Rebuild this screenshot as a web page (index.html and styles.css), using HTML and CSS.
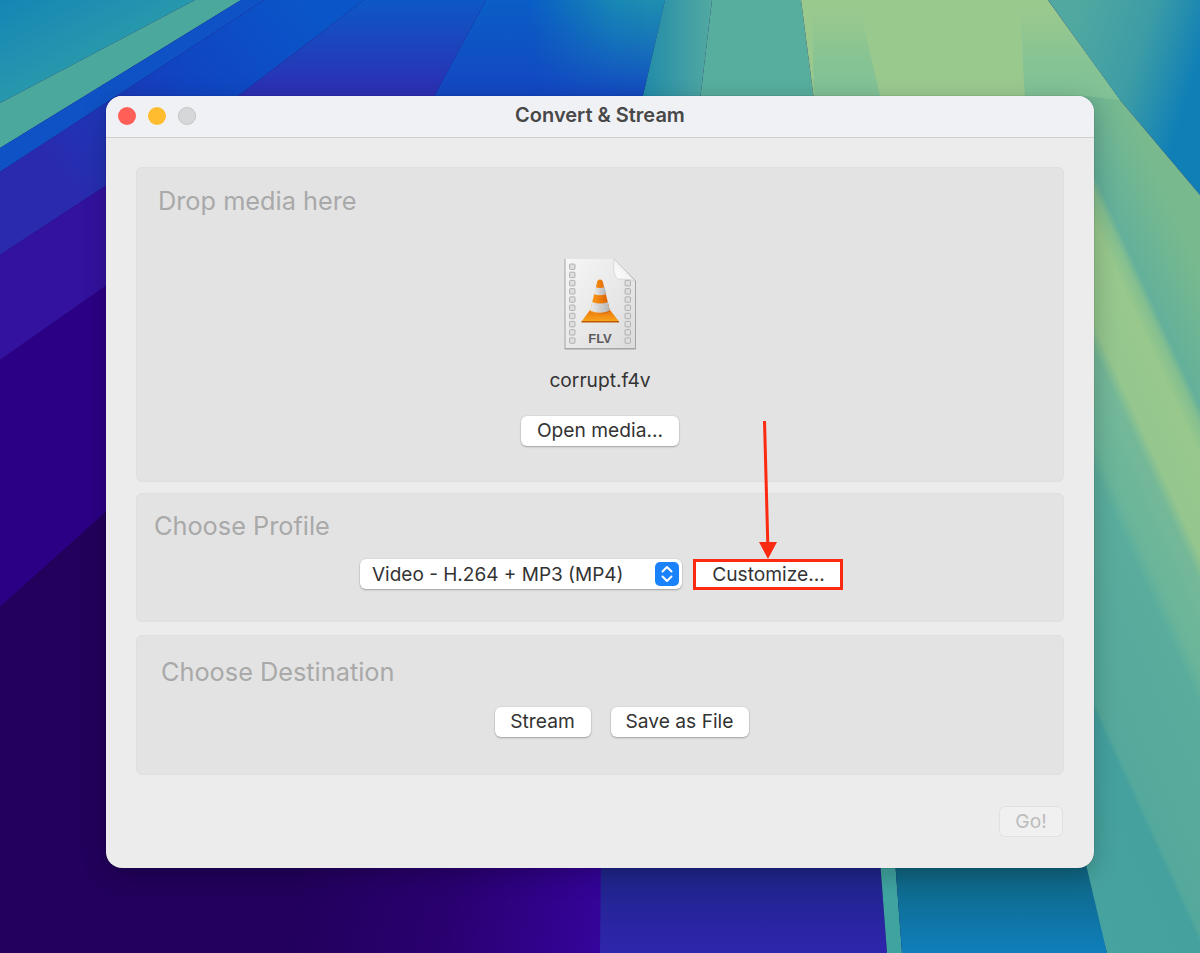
FILE: index.html
```html
<!DOCTYPE html>
<html lang="en">
<head>
<meta charset="utf-8">
<title>Convert &amp; Stream</title>
<link rel="stylesheet" href="styles.css">
</head>
<body>
<svg class="wallpaper" viewBox="0 0 1200 953" aria-hidden="true">
  <defs>
    <linearGradient id="corner" x1="0" y1="0" x2="1" y2="1">
      <stop offset="0" stop-color="#1585b5"/>
      <stop offset="0.6" stop-color="#2a9cab"/>
      <stop offset="1" stop-color="#3ea4a4"/>
    </linearGradient>
    <linearGradient id="leftviolet" gradientUnits="userSpaceOnUse" x1="300" y1="0" x2="70" y2="190">
      <stop offset="0" stop-color="#0a55c8"/>
      <stop offset="0.45" stop-color="#1045c2"/>
      <stop offset="1" stop-color="#2a2aae"/>
    </linearGradient>
    <linearGradient id="wedge" gradientUnits="userSpaceOnUse" x1="0" y1="0" x2="0" y2="100">
      <stop offset="0" stop-color="#0d58c6"/>
      <stop offset="1" stop-color="#2f2cb2"/>
    </linearGradient>
    <linearGradient id="topblue" gradientUnits="userSpaceOnUse" x1="0" y1="0" x2="0" y2="100">
      <stop offset="0" stop-color="#0a5ec6"/>
      <stop offset="1" stop-color="#1445c2"/>
    </linearGradient>
    <linearGradient id="tealfade" gradientUnits="userSpaceOnUse" x1="530" y1="0" x2="650" y2="0">
      <stop offset="0" stop-color="#1a8fb0" stop-opacity="0"/>
      <stop offset="0.7" stop-color="#1a8fb0" stop-opacity="0.85"/>
      <stop offset="1" stop-color="#1f90ae" stop-opacity="0.95"/>
    </linearGradient>
    <linearGradient id="topmask" gradientUnits="userSpaceOnUse" x1="0" y1="0" x2="0" y2="100">
      <stop offset="0" stop-color="#ffffff"/>
      <stop offset="1" stop-color="#000000"/>
    </linearGradient>
    <mask id="fadeDown" maskUnits="userSpaceOnUse" x="500" y="0" width="200" height="100">
      <rect x="500" y="0" width="200" height="100" fill="url(#topmask)"/>
    </mask>
    <linearGradient id="stripes" gradientUnits="userSpaceOnUse" x1="640" y1="0" x2="715" y2="0">
      <stop offset="0" stop-color="#1f8aaa"/>
      <stop offset="0.5" stop-color="#3a9aa6"/>
      <stop offset="1" stop-color="#54aaa0"/>
    </linearGradient>
    <linearGradient id="fadeGreen" x1="0" y1="0" x2="0" y2="1">
      <stop offset="0" stop-color="#82c295" stop-opacity="0"/>
      <stop offset="0.6" stop-color="#82c295" stop-opacity="0.85"/>
      <stop offset="1" stop-color="#80c196"/>
    </linearGradient>
    <linearGradient id="topright" gradientUnits="userSpaceOnUse" x1="1075" y1="20" x2="1200" y2="60">
      <stop offset="0" stop-color="#50a8a0"/>
      <stop offset="0.55" stop-color="#3c9ca6"/>
      <stop offset="1" stop-color="#0f7fb6"/>
    </linearGradient>
    <linearGradient id="rightside" gradientUnits="userSpaceOnUse" x1="1147" y1="150" x2="707" y2="350">
      <stop offset="0" stop-color="#78ba8e"/>
      <stop offset="0.12" stop-color="#64b09a"/>
      <stop offset="0.135" stop-color="#84bf90"/>
      <stop offset="0.163" stop-color="#98c88c"/>
      <stop offset="0.248" stop-color="#94c68e"/>
      <stop offset="0.27" stop-color="#74b898"/>
      <stop offset="0.35" stop-color="#6ab59a"/>
      <stop offset="0.375" stop-color="#5aad9c"/>
      <stop offset="0.57" stop-color="#55a99c"/>
      <stop offset="0.58" stop-color="#45a19e"/>
      <stop offset="1" stop-color="#4aa5a0"/>
    </linearGradient>
    <linearGradient id="darkpurple" gradientUnits="userSpaceOnUse" x1="300" y1="880" x2="600" y2="953">
      <stop offset="0" stop-color="#22005c"/>
      <stop offset="0.5" stop-color="#2a0070"/>
      <stop offset="1" stop-color="#35049c"/>
    </linearGradient>
    <linearGradient id="botviolet" gradientUnits="userSpaceOnUse" x1="0" y1="868" x2="0" y2="953">
      <stop offset="0" stop-color="#1e2488"/>
      <stop offset="1" stop-color="#2f25ae"/>
    </linearGradient>
    <linearGradient id="botblue" gradientUnits="userSpaceOnUse" x1="0" y1="868" x2="0" y2="953">
      <stop offset="0" stop-color="#0f6480"/>
      <stop offset="1" stop-color="#0f7fbc"/>
    </linearGradient>
  </defs>
  <rect width="1200" height="953" fill="#22005e"/>
  <!-- top left -->
  <polygon points="0,0 195,0 0,103" fill="url(#corner)"/>
  <polygon points="195,0 241,0 0,148 0,103" fill="#4aa89c"/>
  <polygon points="241,0 264,0 0,172 0,148" fill="#0f52c6"/>
  <polygon points="264,0 364,0 233,100 110,183 0,255 0,172" fill="url(#leftviolet)"/>
  <polygon points="364,0 486,0 432,100 233,100" fill="url(#wedge)"/>
  <polygon points="486,0 665,0 642,100 432,100" fill="url(#topblue)"/>
  <polygon points="530,0 665,0 642,100 530,100" fill="url(#tealfade)" mask="url(#fadeDown)"/>
  <polygon points="0,255 110,183 200,150 200,250 110,283 0,360" fill="#32129e"/>
  <polygon points="0,360 110,283 200,250 200,450 110,508 0,607" fill="#2c0085"/>
  <polygon points="0,607 110,508 200,450 200,868 601,860 601,953 0,953" fill="url(#darkpurple)"/>
  <!-- top centre -->
  <polygon points="665,0 712,0 700,100 642,100" fill="url(#stripes)"/>
  <polygon points="712,0 801,0 814,100 700,100" fill="#58ae9e"/>
  <polygon points="801,0 1048,0 1120,100 814,100" fill="#9ac98e"/>
  <polygon points="812,10 860,10 881,100 814,100" fill="url(#fadeGreen)"/>
  <polygon points="1020,10 1055,10 1120,100 1025,100" fill="url(#fadeGreen)"/>
  <polygon points="1048,0 1200,0 1200,195 1120,100" fill="url(#topright)"/>
  <!-- right side, below the window's top edge -->
  <polygon points="1085,96 1120,100 1200,195 1200,953 1107,953 1085,880" fill="url(#rightside)"/>
  <!-- bottom -->
  <polygon points="601,860 880,860 887,953 600,953" fill="url(#botviolet)"/>
  <polygon points="880,860 895,860 902,953 887,953" fill="#3fa39f"/>
  <polygon points="895,860 1085,860 1107,953 902,953" fill="url(#botblue)"/>
</svg>

<main class="window">
  <header class="titlebar">
    <div class="lights">
      <span class="light red"></span>
      <span class="light yellow"></span>
      <span class="light grey"></span>
    </div>
    <h1 class="title">Convert &amp; Stream</h1>
  </header>

  <div class="content">
    <section class="panel panel-drop">
      <h2 class="heading">Drop media here</h2>
      <svg class="file-icon" viewBox="0 0 72 92" aria-hidden="true">
        <defs>
          <linearGradient id="paper" x1="0" y1="0" x2="1" y2="1">
            <stop offset="0" stop-color="#f6f6f6"/>
            <stop offset="1" stop-color="#dcdcdc"/>
          </linearGradient>
          <linearGradient id="cone" x1="0" y1="0" x2="1" y2="0">
            <stop offset="0" stop-color="#f9a01e"/>
            <stop offset="0.5" stop-color="#ee7d0c"/>
            <stop offset="1" stop-color="#d25c06"/>
          </linearGradient>
          <linearGradient id="plate" x1="0" y1="0" x2="0" y2="1">
            <stop offset="0" stop-color="#e8760a"/>
            <stop offset="1" stop-color="#fba51c"/>
          </linearGradient>
          <linearGradient id="fold" x1="0" y1="1" x2="1" y2="0">
            <stop offset="0" stop-color="#ffffff"/>
            <stop offset="0.6" stop-color="#f0f0f0"/>
            <stop offset="1" stop-color="#b4b4b4"/>
          </linearGradient>
          <linearGradient id="band" x1="0" y1="0" x2="1" y2="0">
            <stop offset="0" stop-color="#ececec"/>
            <stop offset="1" stop-color="#b4b4b4"/>
          </linearGradient>
        </defs>
        <path class="doc-shadow" d="M0.500 1H50L72 23V91.500H0.500Z"/>
        <path d="M1.500 1H50L71 23V90H1.500Z" fill="url(#paper)"/>
        <g class="holes">
          <rect x="5.500" y="6" width="5.500" height="5.500" rx="1"/>
          <rect x="5.500" y="14.200" width="5.500" height="5.500" rx="1"/>
          <rect x="5.500" y="22.400" width="5.500" height="5.500" rx="1"/>
          <rect x="5.500" y="30.600" width="5.500" height="5.500" rx="1"/>
          <rect x="5.500" y="38.800" width="5.500" height="5.500" rx="1"/>
          <rect x="5.500" y="47" width="5.500" height="5.500" rx="1"/>
          <rect x="5.500" y="55.200" width="5.500" height="5.500" rx="1"/>
          <rect x="5.500" y="63.400" width="5.500" height="5.500" rx="1"/>
          <rect x="5.500" y="71.600" width="5.500" height="5.500" rx="1"/>
          <rect x="5.500" y="79.800" width="5.500" height="5.500" rx="1"/>
          <rect x="61" y="22.400" width="5.500" height="5.500" rx="1"/>
          <rect x="61" y="30.600" width="5.500" height="5.500" rx="1"/>
          <rect x="61" y="38.800" width="5.500" height="5.500" rx="1"/>
          <rect x="61" y="47" width="5.500" height="5.500" rx="1"/>
          <rect x="61" y="55.200" width="5.500" height="5.500" rx="1"/>
          <rect x="61" y="63.400" width="5.500" height="5.500" rx="1"/>
          <rect x="61" y="71.600" width="5.500" height="5.500" rx="1"/>
          <rect x="61" y="79.800" width="5.500" height="5.500" rx="1"/>
        </g>
        <path class="fold" d="M50 1C49 11 50 18 54 21C60 21 66 21 71 23Z" fill="url(#fold)"/>
        <path d="M26 52L46 52L55 63.500H17.500Z" fill="url(#plate)"/>
        <path d="M17.500 63H55V64.500H17.500Z" fill="#bb5a08"/>
        <path d="M33 24.500C33.300 20.500 38.700 20.500 39 24.500L46 53C41 57.500 31 57.500 26 53Z" fill="url(#cone)"/>
        <path d="M31.300 29Q36 31 40.700 29L42.300 36Q36 38.500 29.700 36Z" fill="url(#band)"/>
        <path d="M28.200 44Q36 47 43.800 44L45.800 52.500Q36 57 26.200 52.500Z" fill="url(#band)"/>
        <text class="flv" x="36" y="85" text-anchor="middle">FLV</text>
      </svg>
      <p class="filename">corrupt.f4v</p>
      <button class="btn btn-open" type="button">Open media...</button>
    </section>

    <section class="panel panel-profile">
      <h2 class="heading">Choose Profile</h2>
      <div class="row row-profile">
        <div class="select">
          <span>Video - H.264 + MP3 (MP4)</span>
          <span class="stepper">
            <svg viewBox="0 0 24 24" aria-hidden="true">
              <path d="M7.500 9.500L12 5L16.500 9.500M7.500 14.500L12 19L16.500 14.500"/>
            </svg>
          </span>
        </div>
        <button class="btn btn-customize" type="button">Customize...</button>
      </div>
    </section>

    <section class="panel panel-dest">
      <h2 class="heading">Choose Destination</h2>
      <div class="row row-dest">
        <button class="btn btn-stream" type="button">Stream</button>
        <button class="btn btn-save" type="button">Save as File</button>
      </div>
    </section>

    <div class="footer">
      <button class="btn btn-go" type="button" disabled>Go!</button>
    </div>
  </div>
</main>

<svg class="arrow" viewBox="0 0 40 145" aria-hidden="true">
  <path d="M15.500 1L18.800 124" class="arrow-line"/>
  <path d="M10 122H28L19 139Z" class="arrow-head"/>
</svg>
<div class="highlight"></div>
</body>
</html>
```

FILE: styles.css
```css
* { box-sizing: border-box; }
html, body { margin: 0; height: 100%; }
body {
  position: relative;
  width: 1200px;
  height: 953px;
  overflow: hidden;
  background: #22005e;
  font-family: Inter, "Liberation Sans", sans-serif;
}
.wallpaper {
  position: absolute;
  left: 0;
  top: 0;
  display: block;
  width: 1200px;
  height: 953px;
}
.window {
  position: absolute;
  left: 106px;
  top: 96px;
  width: 988px;
  height: 772px;
  background: #ececec;
  border-radius: 16px;
  overflow: hidden;
  box-shadow: 0 6px 24px rgba(0, 0, 0, 0.22), 0 0 1px rgba(0, 0, 0, 0.5);
  display: flex;
  flex-direction: column;
}
.titlebar {
  flex: none;
  position: relative;
  height: 42px;
  background: #f0f1f5;
  border-bottom: 1px solid #d0d0d0;
  display: flex;
  align-items: center;
  justify-content: center;
}
.lights {
  position: absolute;
  left: 12px;
  top: 11px;
  display: flex;
  gap: 12px;
}
.light {
  width: 18px;
  height: 18px;
  border-radius: 50%;
}
.red { background: #ff5f57; }
.yellow { background: #febc2e; }
.grey { background: #d6d7d8; box-shadow: inset 0 0 0 1px #c8c8c8; }
.title {
  margin: 0 0 3px;
  font-size: 20px;
  font-weight: 600;
  color: #484848;
  line-height: 24px;
}
.content {
  flex: 1;
  padding: 29px 30px 0;
  display: flex;
  flex-direction: column;
}
.panel {
  position: relative;
  background: #e3e3e3;
  border: 1px solid #dfdfdf;
  border-radius: 6px;
  display: flex;
  flex-direction: column;
  align-items: center;
}
.heading {
  align-self: flex-start;
  margin: 0;
  font-size: 25.300px;
  font-weight: 400;
  line-height: 30px;
  color: #a9a9a9;
}
.panel-drop { height: 315px; padding-top: 18px; }
.panel-drop .heading { margin-left: 21px; }
.file-icon {
  display: block;
  width: 72px;
  height: 92px;
  margin-top: 42px;
}
.doc-shadow { fill: #a4a4a4; }
.fold { stroke: #c0c0c0; stroke-width: 0.5; }
.holes rect { fill: #dedede; stroke: #a4a4a4; stroke-width: 0.8; }
.flv {
  font-family: "Liberation Sans", Arial, sans-serif;
  font-size: 13px;
  font-weight: 700;
  fill: #5c5c5c;
}
.filename {
  margin: 18px 0 0;
  font-size: 19.200px;
  line-height: 24px;
  color: #333333;
}
.btn {
  font-family: inherit;
  font-size: 19.200px;
  line-height: 24px;
  color: #333333;
  height: 30px;
  padding: 0 0 2px;
  background: #ffffff;
  border: 0;
  border-radius: 6px;
  box-shadow: 0 1px 2px rgba(0, 0, 0, 0.28), 0 0 0 0.5px rgba(0, 0, 0, 0.06);
}
.btn-open { width: 158px; margin-top: 24px; }
.panel-profile { height: 129px; margin-top: 11px; padding-top: 17px; }
.panel-profile .heading { margin-left: 17px; }
.row { display: flex; align-items: flex-start; }
.row-profile { margin-top: 18px; }
.select {
  width: 322px;
  height: 30px;
  margin-left: 1px;
  background: #ffffff;
  border-radius: 6px;
  box-shadow: 0 1px 2px rgba(0, 0, 0, 0.28), 0 0 0 0.5px rgba(0, 0, 0, 0.06);
  display: flex;
  align-items: center;
  justify-content: space-between;
  padding: 0 3px 0 12px;
  font-size: 19px;
  color: #333333;
}
.stepper {
  width: 24px;
  height: 24px;
  background: #1a82fb;
  border-radius: 5px;
  display: block;
}
.stepper svg { display: block; width: 24px; height: 24px; }
.stepper path { fill: none; stroke: #ffffff; stroke-width: 2; stroke-linecap: round; stroke-linejoin: round; }
.btn-customize { width: 147px; height: 31px; margin-left: 12px; padding-left: 2px; border-radius: 0; box-shadow: none; }
.panel-dest { height: 140px; margin-top: 13px; padding-top: 21px; }
.panel-dest .heading { margin-left: 24px; }
.row-dest { margin-top: 20px; gap: 20px; margin-left: 43px; }
.btn-stream { width: 96px; }
.btn-save { width: 138px; }
.footer {
  display: flex;
  justify-content: flex-end;
  margin-top: 31px;
  padding-right: 1px;
}
.btn-go {
  width: 64px;
  height: 31px;
  background: #f0f0f0;
  color: #bcbcbc;
  box-shadow: inset 0 0 0 1px #e0e0e0;
}
.arrow {
  position: absolute;
  left: 749px;
  top: 420px;
  width: 40px;
  height: 145px;
}
.arrow-line { fill: none; stroke: #fb2a10; stroke-width: 3; }
.arrow-head { fill: #fb2a10; }
.highlight {
  position: absolute;
  left: 693px;
  top: 559px;
  width: 150px;
  height: 31px;
  border: 3.500px solid #fb2a10;
}
```
